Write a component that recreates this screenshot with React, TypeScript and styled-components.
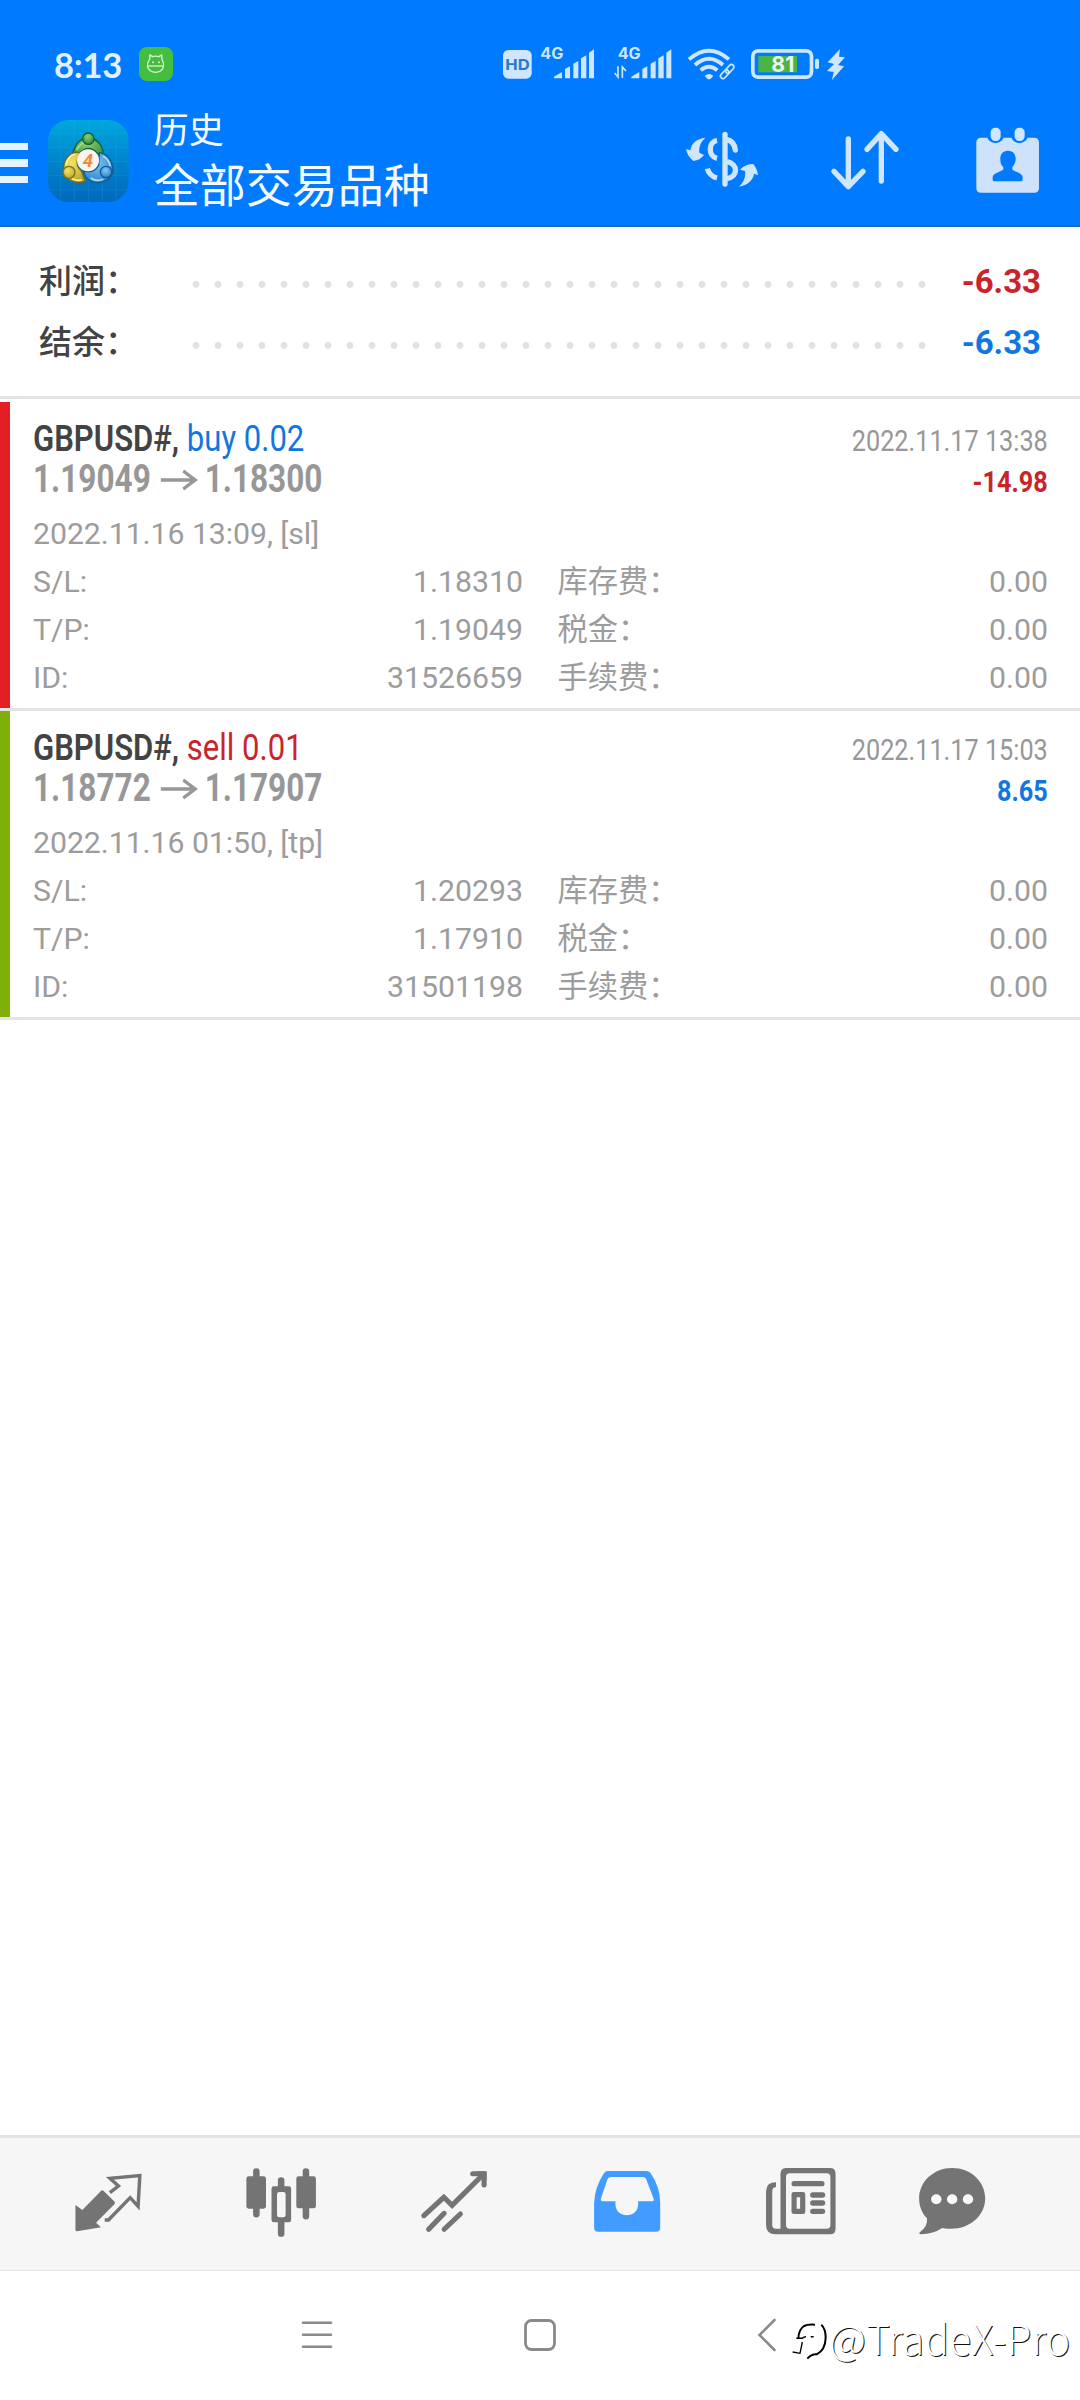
import React from "react";
import styled, { createGlobalStyle } from "styled-components";

const BLUE = "#007aff";
const ICE = "#cfe6ff";
const GREY = "#747474";

const GlobalStyle = createGlobalStyle`
  body {
    margin: 0;
    background: #fff;
  }
  *, *::before, *::after {
    box-sizing: border-box;
  }
`;

const Screen = styled.div`
  position: relative;
  display: flex;
  flex-direction: column;
  width: 1080px;
  height: 2400px;
  overflow: hidden;
  background: #fff;
  color: #434343;
  font-family: Roboto, "Noto Sans CJK SC", sans-serif;
`;

const Drawing = styled.svg`
  display: block;
  flex: none;
  overflow: visible;
`;

/* ---------- header ---------- */

const Header = styled.header`
  display: flex;
  flex-direction: column;
  height: 227px;
  flex: none;
  background: ${BLUE};
  border-bottom: 2px solid #1a6cc4;
`;

const StatusBar = styled.div`
  display: flex;
  align-items: flex-start;
  height: 100px;
  padding: 46px 0 0 54px;
`;

const Clock = styled.span`
  width: 85px;
  color: #e2f1ff;
  font-family: Lato, Roboto, sans-serif;
  font-size: 34.5px;
  font-weight: 700;
  line-height: 37px;
  letter-spacing: -0.2px;
`;

const StatusIcon = styled.div<{ $gap: number; $top?: number }>`
  margin-left: ${(p) => p.$gap}px;
  padding-top: ${(p) => p.$top ?? 0}px;
`;

const AppBar = styled.div`
  display: flex;
  align-items: flex-start;
  flex: 1;
`;

const MenuButton = styled.div`
  display: flex;
  flex-direction: column;
  gap: 9px;
  width: 28px;
  margin-top: 42.5px;
`;

const MenuLine = styled.span`
  height: 7.5px;
  background: #e4f3ff;
`;

const AppIcon = styled.div`
  margin: 20px 0 0 19.5px;
`;

const Titles = styled.div`
  display: flex;
  flex-direction: column;
  flex: 1;
  margin: 0 0 0 25.5px;
  color: #f4faff;
  font-family: "Noto Sans CJK SC", sans-serif;
`;

const Eyebrow = styled.span`
  font-size: 35px;
  font-weight: 400;
  line-height: 56px;
`;

const Title = styled.h1`
  margin: 0;
  font-size: 46px;
  font-weight: 400;
  line-height: 53px;
`;

const Actions = styled.div`
  display: flex;
  align-items: flex-start;
  padding: 26px 39.5px 0 0;
`;

const Action = styled.div<{ $gap?: number; $top?: number }>`
  margin-left: ${(p) => p.$gap ?? 0}px;
  padding-top: ${(p) => p.$top ?? 0}px;
`;

/* ---------- summary ---------- */

const Summary = styled.section`
  flex: none;
  height: 172px;
  padding: 24px 39px 0 39px;
  border-bottom: 3px solid #e4e4e4;
`;

const SummaryRow = styled.div`
  display: grid;
  grid-template-columns: 145.6px 748px 1fr;
  height: 61px;
  font-size: 33px;
  line-height: 61px;
`;

const SummaryLabel = styled.span`
  font-weight: 500;
`;

const Dots = styled.span`
  background-image: radial-gradient(circle at 11px 33.4px, #e2e2e2 3px, transparent 3.9px);
  background-size: 22px 61px;
`;

const SummaryValue = styled.span<{ $color: string }>`
  color: ${(p) => p.$color};
  font-weight: 700;
  text-align: right;
  white-space: nowrap;
`;

/* ---------- deals ---------- */

const Deals = styled.main`
  flex: 1;
  padding-top: 3px;
`;

const DealCard = styled.article`
  display: flex;
  height: 309px;
  border-bottom: 3px solid #e4e4e4;
`;

const Stripe = styled.span<{ $color: string }>`
  width: 9.6px;
  background: ${(p) => p.$color};
`;

const DealBody = styled.div`
  flex: 1;
  padding: 16px 32px 0 23.4px;
  color: #979797;
`;

const DealHead = styled.div`
  display: flex;
  justify-content: space-between;
  height: 92px;
`;

const HeadLeft = styled.div`
  display: flex;
  flex-direction: column;
  font-size: 38px;
  line-height: 41px;
  transform: scaleX(0.83);
  transform-origin: left;
  white-space: nowrap;
`;

const Instrument = styled.span`
  font-size: 37.4px;
`;

const Symbol = styled.span`
  color: #434343;
  font-weight: 600;
`;

const Side = styled.span<{ $color: string }>`
  color: ${(p) => p.$color};
`;

const Prices = styled.span`
  display: flex;
  align-items: center;
  font-weight: 700;
`;

const HeadRight = styled.div`
  display: flex;
  flex-direction: column;
  align-items: flex-end;
  padding-top: 1.6px;
  font-size: 30.25px;
  line-height: 41px;
  transform: scaleX(0.835);
  transform-origin: right;
  white-space: nowrap;
`;

const Profit = styled.span<{ $color: string }>`
  color: ${(p) => p.$color};
  font-weight: 700;
`;

const Details = styled.div`
  display: grid;
  grid-template-columns: 490px 1fr;
  column-gap: 34.5px;
  color: #9c9c9c;
  font-size: 30.25px;
  font-weight: 400;
  line-height: 48px;
`;

const Opened = styled.div`
  grid-column: 1 / -1;
  letter-spacing: -0.05px;
`;

const Pair = styled.div`
  display: flex;
  justify-content: space-between;
`;

/* ---------- bottom ---------- */

const TabBar = styled.nav`
  display: grid;
  grid-template-columns: repeat(5, 173.2px) 130.6px;
  justify-items: center;
  flex: none;
  height: 136px;
  padding: 29px 0 0 21.4px;
  background: #f6f6f6;
  border-top: 3px solid #e4e4e4;
  border-bottom: 1px solid #e6e6e6;
`;

const SystemNav = styled.nav`
  display: grid;
  grid-template-columns: 221px 234px 1fr;
  flex: none;
  height: 129px;
  padding: 46px 0 0 302px;
`;

const Watermark = styled.div`
  position: absolute;
  left: 789px;
  top: 2306px;
  display: flex;
  align-items: center;
  height: 64px;
  color: #fff;
  font-family: "Noto Sans CJK SC", sans-serif;
  font-size: 40.5px;
  font-weight: 300;
  line-height: 64px;
  letter-spacing: 0.35px;
  white-space: nowrap;
  text-shadow: 1px 1px 0 #111;
`;

const bars = (dx: number) => (
  <g fill={ICE} transform={`translate(${dx} 0)`}>
    <path d="M222 174V169L246 155V174Z" />
    <path d="M255 174V146L270 138V174Z" />
    <path d="M280 174V130L295 122V174Z" />
    <path d="M303 174V114L319 105V174Z" />
    <path d="M327 174V97L342 87V174Z" />
  </g>
);

const svgBold = { fontFamily: "Inter, Roboto, sans-serif", fontWeight: 700 } as const;

function StatusIcons() {
  return (
    <>
      <StatusIcon $gap={0} $top={1}>
        <Drawing width="34" height="34" viewBox="417 81 102 102">
          <rect x="417" y="81" width="102" height="102" rx="24" fill="#45bd3f" />
          <g fill="none" stroke="#d4f5cf" strokeWidth="4">
            <path d="M449 118L450 105L458 110Q467 107 476 110L485 105L486 118Q493 130 490 142Q484 157 467 157Q449 157 443 142Q441 128 449 118Z" />
            <path d="M443 138H491" />
          </g>
          <circle cx="459" cy="127" r="3" fill="#d4f5cf" />
          <circle cx="477" cy="127" r="3" fill="#d4f5cf" />
        </Drawing>
      </StatusIcon>
      <StatusIcon $gap={329.7} $top={3.7}>
        <Drawing width="28.7" height="28.7" viewBox="68 89 86 86">
          <rect x="68" y="89" width="86" height="86" rx="16" fill={ICE} />
          <text x="75" y="150" fontSize="45" fill="#2578cf" textLength="73" lengthAdjust="spacingAndGlyphs" {...svgBold}>HD</text>
        </Drawing>
      </StatusIcon>
      <StatusIcon $gap={8.3} $top={0.7}>
        <Drawing width="54.7" height="32" viewBox="180 80 164 96">
          <text x="181" y="117" fontSize="46" fill={ICE} textLength="69" lengthAdjust="spacingAndGlyphs" {...svgBold}>4G</text>
          {bars(0)}
        </Drawing>
      </StatusIcon>
      <StatusIcon $gap={20} $top={0.7}>
        <Drawing width="58" height="32" viewBox="404 80 174 96">
          <text x="415" y="117" fontSize="46" fill={ICE} textLength="69" lengthAdjust="spacingAndGlyphs" {...svgBold}>4G</text>
          <path d="M416 138V170L406 158M429 173V140L440 152" fill="none" stroke={ICE} strokeWidth="5" />
          {bars(234)}
        </Drawing>
      </StatusIcon>
      <StatusIcon $gap={15.3} $top={2}>
        <Drawing width="47.3" height="32" viewBox="624 84 142 96">
          <g fill="none" stroke={ICE} strokeWidth="11.5">
            <path d="M627 118Q687 66 747 118" />
            <path d="M645 135Q687 98 729 135" />
            <path d="M662 151Q687 130 712 151" />
          </g>
          <path d="M674 168Q687 156 700 168L692 176Q687 180 682 176Z" fill={ICE} />
          <g fill="none" stroke={ICE} strokeWidth="5" transform="rotate(-47 742 155)">
            <rect x="716" y="147" width="30" height="15" rx="7.5" />
            <rect x="738" y="147" width="30" height="15" rx="7.5" />
          </g>
        </Drawing>
      </StatusIcon>
      <StatusIcon $gap={15.7} $top={3}>
        <Drawing width="68" height="30" viewBox="813 87 204 90">
          <rect x="835" y="108" width="116" height="49" fill="#4cb345" />
          <rect x="818.5" y="92.5" width="176" height="79" rx="16" fill="none" stroke={ICE} strokeWidth="11" />
          <rect x="1005" y="116" width="12" height="31" rx="5" fill={ICE} />
          <text x="874" y="157" fontSize="66" fill="#eaf6ea" textLength="69" lengthAdjust="spacingAndGlyphs" {...svgBold}>81</text>
        </Drawing>
      </StatusIcon>
      <StatusIcon $gap={8} $top={2.7}>
        <Drawing width="18" height="31" viewBox="1041 86 54 93">
          <path d="M1080 86L1043 126L1062 131L1041 152L1061 155L1056 179L1092 138L1074 134L1095 111L1077 109Z" fill={ICE} />
        </Drawing>
      </StatusIcon>
    </>
  );
}

function AppLogo() {
  return (
    <Drawing width="80.7" height="82" viewBox="144 300 242 246">
      <defs>
        <linearGradient id="tile" x1="0" y1="0" x2="0" y2="1">
          <stop offset="0" stopColor="#00a8dc" />
          <stop offset="0.5" stopColor="#0084cc" />
          <stop offset="1" stopColor="#0068bb" />
        </linearGradient>
        <radialGradient id="green" cx="0.45" cy="0.3" r="0.8">
          <stop offset="0" stopColor="#8cd070" />
          <stop offset="1" stopColor="#23843c" />
        </radialGradient>
        <radialGradient id="yellow" cx="0.4" cy="0.35" r="0.8">
          <stop offset="0" stopColor="#f4e468" />
          <stop offset="1" stopColor="#b39b1c" />
        </radialGradient>
        <radialGradient id="sky" cx="0.45" cy="0.35" r="0.8">
          <stop offset="0" stopColor="#7cc8f4" />
          <stop offset="1" stopColor="#1b74c0" />
        </radialGradient>
      </defs>
      <rect x="144" y="300" width="242" height="246" rx="62" fill="url(#tile)" />
      <path d="M182 308V538M223 302V544M265 300V546M307 302V544M348 308V538M150 340H380M144 382H386M144 424H386M144 467H386M150 510H380" stroke="#35b4e8" strokeWidth="1.5" opacity="0.4" />
      <g strokeWidth="4">
        <path d="M220 414C216 380 238 354 265 354C292 354 314 380 310 416L290 398Q265 372 240 398Z" fill="url(#green)" stroke="#14602f" />
        <path d="M230 390Q242 366 264 364" fill="none" stroke="#a9dc8c" strokeWidth="5" />
        <path d="M240 398C208 392 190 420 190 450C192 480 226 494 256 484L244 452Q228 440 232 420Z" fill="url(#yellow)" stroke="#6d6a20" />
        <path d="M198 436Q202 408 226 402M216 476Q232 484 246 479" fill="none" stroke="#fbf3a0" strokeWidth="5" />
        <path d="M298 398C326 402 340 428 338 456C330 490 282 496 262 476Q252 466 250 452Q280 462 296 436Z" fill="url(#sky)" stroke="#145a94" />
        <path d="M308 408Q326 416 331 438M272 474Q290 486 310 478" fill="none" stroke="#a4dcf8" strokeWidth="5" />
        <circle cx="265" cy="356" r="17" fill="url(#green)" stroke="#14602f" />
        <circle cx="207" cy="457" r="18" fill="url(#yellow)" stroke="#7e7420" />
        <circle cx="318" cy="456" r="17" fill="url(#sky)" stroke="#145a94" />
      </g>
      <circle cx="264" cy="421" r="33" fill="#f8f4ee" />
      <text x="264" y="441" textAnchor="middle" fontSize="56" fontStyle="italic" fontWeight="700" fontFamily="Roboto, sans-serif" fill="#f08a3c">4</text>
    </Drawing>
  );
}

function HeaderActions() {
  return (
    <Actions>
      <Action $top={4}>
        <Drawing width="74" height="58.3" viewBox="615 330 222 175">
          <g fill="none" stroke={ICE} strokeWidth="16">
            <path d="M735 343V492" strokeLinecap="round" />
            <path d="M711 361C684 366 684 409 711 415" />
            <path d="M682 446Q688 468 711 474" />
            <path d="M741 359Q763 364 766 390" strokeLinecap="round" />
            <path d="M741 425C775 432 775 470 741 476" />
          </g>
          <path d="M676 353C650 356 634 370 631 391L618 387Q621 408 640 423Q660 421 672 405L658 398C656 380 662 366 676 353Z" fill={ICE} />
          <path d="M777 500C803 496 820 480 822 461L834 466Q832 446 820 432Q795 432 780 449L795 453C798 472 791 487 777 500Z" fill={ICE} />
        </Drawing>
      </Action>
      <Action $gap={71} $top={3.3}>
        <Drawing width="70" height="62" viewBox="30 88 210 186">
          <g fill="none" stroke={ICE} strokeWidth="16" strokeLinecap="round" strokeLinejoin="round">
            <path d="M85 118V260M42 215L85 261L129 215" />
            <path d="M184 103V244M141 149L184 102L228 149" />
          </g>
        </Drawing>
      </Action>
      <Action $gap={75.3} $top={0.7}>
        <Drawing width="65.3" height="66.7" viewBox="466 80 196 200">
          <rect x="470" y="112" width="188" height="165" rx="13" fill="#cfe2fb" />
          <rect x="503" y="76" width="49" height="52" rx="22" fill={BLUE} />
          <rect x="575" y="76" width="49" height="52" rx="22" fill={BLUE} />
          <rect x="513" y="82" width="30" height="40" rx="14" fill={ICE} />
          <rect x="585" y="82" width="30" height="40" rx="14" fill={ICE} />
          <path d="M565 151C581 151 589 163 588 178C587 189 582 196 578 200V208C590 215 609 219 609 231V238Q609 243 603 243H525Q519 243 519 238V231C519 219 540 215 551 208V200C546 196 542 189 542 178C541 163 549 151 565 151Z" fill={BLUE} />
        </Drawing>
      </Action>
    </Actions>
  );
}

const TabIcon = ({ x, children }: { x: number; children: React.ReactNode }) => (
  <Drawing width="72.3" height="70" viewBox={`${x} 140 210 210`} preserveAspectRatio="none">
    {children}
  </Drawing>
);

function Tabs() {
  return (
    <TabBar>
      <TabIcon x={209}>
        <path d="M219 254L239 269L293 212Q297 208 301 212L333 244Q335 248 332 252L279 307L293 321L224 333Q219 333 219 328Z" fill={GREY} />
        <path d="M319 217L344 197L319 174L406 166L401 258L378 232L315 299H304" fill="none" stroke={GREY} strokeWidth="10" />
      </TabIcon>
      <TabIcon x={711}>
        <path d="M744 153V282M888 153V288M816 180V200M816 306V340" stroke={GREY} strokeWidth="19" strokeLinecap="round" />
        <rect x="715" y="168" width="57" height="97" rx="7" fill={GREY} />
        <rect x="860" y="168" width="57" height="96" rx="7" fill={GREY} />
        <rect x="788" y="198" width="57" height="108" rx="7" fill={GREY} />
        <rect x="804" y="215" width="25" height="76" rx="7" fill="#f6f6f6" />
      </TabIcon>
      <TabIcon x={1214}>
        <g fill="none" stroke={GREY} strokeWidth="15" strokeLinecap="round">
          <path d="M1231 286L1289 231L1313 255L1404 162" />
          <path d="M1373 160H1406V194" />
          <path d="M1245 327L1290 279M1290 327L1337 281" />
        </g>
        <path d="M1385 153H1407Q1413 153 1413 160V180Z" fill={GREY} />
      </TabIcon>
      <TabIcon x={149}>
        <path fillRule="evenodd" d="M198 152H311Q318 152 322 158Q350 200 350 248V322Q350 334 338 334H170Q158 334 158 322V248Q160 200 187 158Q191 152 198 152ZM207 170Q200 170 197 176L178 234Q176 243 183 243H220V252C220 296 286 296 286 252V243H326Q333 243 331 235L309 176Q306 170 299 170Z" fill="#429cff" />
      </TabIcon>
      <TabIcon x={653}>
        <path fillRule="evenodd" d="M716 143H842Q858 143 858 160V325Q858 342 842 342H684Q656 342 656 314V214Q656 186 685 186V200Q674 201 674 214V314Q674 325 685 325H698V160Q698 143 716 143ZM725 159Q714 159 714 170V314Q714 325 725 325H832Q843 325 843 314V170Q843 159 832 159Z" fill={GREY} />
        <path d="M738 190H818M792 224H820M792 248H820M792 273H820" stroke={GREY} strokeWidth="16" strokeLinecap="round" />
        <path fillRule="evenodd" d="M737 215H763Q770 215 770 222V274Q770 281 763 281H737Q730 281 730 274V222Q730 215 737 215ZM745 231V265H755V231Z" fill={GREY} />
      </TabIcon>
      <TabIcon x={1094}>
        <path d="M1199 143C1252 143 1295 183 1295 234C1295 292 1240 337 1170 323Q1145 341 1108 342Q1101 341 1105 336Q1129 318 1126 294C1112 280 1103 257 1103 235C1103 183 1146 143 1199 143Z" fill={GREY} />
        <circle cx="1153" cy="237" r="15" fill="#fafafa" />
        <circle cx="1199" cy="237" r="15" fill="#fafafa" />
        <circle cx="1245" cy="237" r="15" fill="#fafafa" />
      </TabIcon>
    </TabBar>
  );
}

const RED = "#c9242a";
const LINK = "#1276e0";

const deals = [
  {
    stripe: "#e31e24", symbol: "GBPUSD#,", side: "buy 0.02", sideColor: LINK,
    open: "1.19049", close: "1.18300", closedAt: "2022.11.17 13:38", profit: "-14.98", profitColor: RED,
    opened: "2022.11.16 13:09, [sl]", sl: "1.18310", tp: "1.19049", id: "31526659",
  },
  {
    stripe: "#7fb00a", symbol: "GBPUSD#,", side: "sell 0.01", sideColor: RED,
    open: "1.18772", close: "1.17907", closedAt: "2022.11.17 15:03", profit: "8.65", profitColor: LINK,
    opened: "2022.11.16 01:50, [tp]", sl: "1.20293", tp: "1.17910", id: "31501198",
  },
];

const Arrow = () => (
  <Drawing width="65" height="24" viewBox="0 0 65 24">
    <path d="M12 12H53M39 3L53.500 12L39 21" fill="none" stroke="#979797" strokeWidth="3.4" />
  </Drawing>
);

export default function App() {
  return (
    <Screen>
      <GlobalStyle />
      <Header>
        <StatusBar>
          <Clock>8:13</Clock>
          <StatusIcons />
        </StatusBar>
        <AppBar>
          <MenuButton>
            <MenuLine />
            <MenuLine />
            <MenuLine />
          </MenuButton>
          <AppIcon>
            <AppLogo />
          </AppIcon>
          <Titles>
            <Eyebrow>历史</Eyebrow>
            <Title>全部交易品种</Title>
          </Titles>
          <HeaderActions />
        </AppBar>
      </Header>

      <Summary>
        <SummaryRow>
          <SummaryLabel>利润：</SummaryLabel>
          <Dots />
          <SummaryValue $color={RED}>-6.33</SummaryValue>
        </SummaryRow>
        <SummaryRow>
          <SummaryLabel>结余：</SummaryLabel>
          <Dots />
          <SummaryValue $color={LINK}>-6.33</SummaryValue>
        </SummaryRow>
      </Summary>

      <Deals>
        {deals.map((d) => (
          <DealCard key={d.id}>
            <Stripe $color={d.stripe} />
            <DealBody>
              <DealHead>
                <HeadLeft>
                  <Instrument>
                    <Symbol>{d.symbol}</Symbol> <Side $color={d.sideColor}>{d.side}</Side>
                  </Instrument>
                  <Prices>
                    {d.open}
                    <Arrow />
                    {d.close}
                  </Prices>
                </HeadLeft>
                <HeadRight>
                  <span>{d.closedAt}</span>
                  <Profit $color={d.profitColor}>{d.profit}</Profit>
                </HeadRight>
              </DealHead>
              <Details>
                <Opened>{d.opened}</Opened>
                <Pair><span>S/L:</span><span>{d.sl}</span></Pair>
                <Pair><span>库存费：</span><span>0.00</span></Pair>
                <Pair><span>T/P:</span><span>{d.tp}</span></Pair>
                <Pair><span>税金：</span><span>0.00</span></Pair>
                <Pair><span>ID:</span><span>{d.id}</span></Pair>
                <Pair><span>手续费：</span><span>0.00</span></Pair>
              </Details>
            </DealBody>
          </DealCard>
        ))}
      </Deals>

      <Tabs />

      <SystemNav>
        <Drawing width="30" height="36" viewBox="0 0 30 36">
          <path d="M1 5.700H29M1 17.700H29M1 29.700H29" stroke="#8a8a8a" strokeWidth="2.600" strokeLinecap="round" />
        </Drawing>
        <Drawing width="34" height="36" viewBox="0 0 34 36">
          <rect x="2.500" y="3.500" width="29" height="29" rx="6" fill="none" stroke="#8a8a8a" strokeWidth="2.800" />
        </Drawing>
        <Drawing width="20" height="36" viewBox="0 0 20 36">
          <path d="M17.500 3L2.500 18L17.500 33" fill="none" stroke="#8a8a8a" strokeWidth="2.600" strokeLinecap="round" />
        </Drawing>
      </SystemNav>

      <Watermark>
        <Drawing width="40" height="44" viewBox="27 30 120 132">
          <g fill="none" stroke="#000">
            <path d="M55 98Q56 70 72 60Q84 54 105 56" strokeWidth="6" />
            <path d="M49 97H66Q72 92 78 92M92 92H101" strokeWidth="4.500" />
            <path d="M67 108L60 142L38 138" strokeWidth="4" />
            <path d="M124 56Q137 68 137 96Q136 132 110 145Q94 144 82 158" strokeWidth="6" />
          </g>
        </Drawing>
        @TradeX-Pro
      </Watermark>
    </Screen>
  );
}
